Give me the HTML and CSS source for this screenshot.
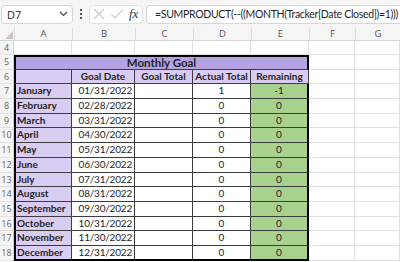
FILE: index.html
```html
<!DOCTYPE html>
<html lang="en">
<head>
  <meta charset="UTF-8">
  <title>Monthly Goal</title>
  <link rel="stylesheet" href="styles.css">
</head>
<body>

  <div class="toolbar">
    <div class="namebox">
      <span>D7</span>
      <svg width="9" height="6" viewBox="0 0 9 6"><path d="M1 1 L4.5 4.5 L8 1" fill="none" stroke="#444" stroke-width="1.2"/></svg>
    </div>
    <div class="dots"><i></i><i></i><i></i></div>
    <div class="fxbox">
      <svg width="14" height="14" viewBox="0 0 14 14"><path d="M2 2 L12 12 M12 2 L2 12" stroke="#c8c8c8" stroke-width="1.1"/></svg>
      <svg width="14" height="14" viewBox="0 0 14 14"><path d="M1.5 7.5 L5 11 L12.5 3" fill="none" stroke="#c8c8c8" stroke-width="1.1"/></svg>
      <span class="fx">fx</span>
    </div>
    <div class="formula">=SUMPRODUCT(--((MONTH(Tracker[Date Closed])=1)))</div>
  </div>

  <div class="sheet">
    <div class="corner"><svg width="8" height="8" viewBox="0 0 8 8"><path d="M8 0 L8 8 L0 8 Z" fill="#c6c6c6"/></svg></div>
    <div class="colhead">A</div>
    <div class="colhead">B</div>
    <div class="colhead">C</div>
    <div class="colhead">D</div>
    <div class="colhead">E</div>
    <div class="colhead">F</div>
    <div class="colhead">G</div>

    <div class="rowhead">4</div>
    <div class="cell"></div><div class="cell"></div><div class="cell"></div><div class="cell"></div><div class="cell"></div><div class="cell"></div><div class="cell"></div>

    <div class="rowhead">5</div>
    <div class="title">Monthly Goal</div>
    <div class="cell"></div><div class="cell"></div>

    <div class="rowhead">6</div>
    <div class="month"></div>
    <div class="head">Goal Date</div>
    <div class="head">Goal Total</div>
    <div class="head">Actual Total</div>
    <div class="head">Remaining</div>
    <div class="cell"></div><div class="cell"></div>

    <div class="rowhead">7</div>
    <div class="month">January</div><div class="date">01/31/2022</div><div class="blank"></div><div class="num">1</div><div class="rem">-1</div>
    <div class="cell"></div><div class="cell"></div>

    <div class="rowhead">8</div>
    <div class="month">February</div><div class="date">02/28/2022</div><div class="blank"></div><div class="num">0</div><div class="rem">0</div>
    <div class="cell"></div><div class="cell"></div>

    <div class="rowhead">9</div>
    <div class="month">March</div><div class="date">03/31/2022</div><div class="blank"></div><div class="num">0</div><div class="rem">0</div>
    <div class="cell"></div><div class="cell"></div>

    <div class="rowhead">10</div>
    <div class="month">April</div><div class="date">04/30/2022</div><div class="blank"></div><div class="num">0</div><div class="rem">0</div>
    <div class="cell"></div><div class="cell"></div>

    <div class="rowhead">11</div>
    <div class="month">May</div><div class="date">05/31/2022</div><div class="blank"></div><div class="num">0</div><div class="rem">0</div>
    <div class="cell"></div><div class="cell"></div>

    <div class="rowhead">12</div>
    <div class="month">June</div><div class="date">06/30/2022</div><div class="blank"></div><div class="num">0</div><div class="rem">0</div>
    <div class="cell"></div><div class="cell"></div>

    <div class="rowhead">13</div>
    <div class="month">July</div><div class="date">07/31/2022</div><div class="blank"></div><div class="num">0</div><div class="rem">0</div>
    <div class="cell"></div><div class="cell"></div>

    <div class="rowhead">14</div>
    <div class="month">August</div><div class="date">08/31/2022</div><div class="blank"></div><div class="num">0</div><div class="rem">0</div>
    <div class="cell"></div><div class="cell"></div>

    <div class="rowhead">15</div>
    <div class="month">September</div><div class="date">09/30/2022</div><div class="blank"></div><div class="num">0</div><div class="rem">0</div>
    <div class="cell"></div><div class="cell"></div>

    <div class="rowhead">16</div>
    <div class="month">October</div><div class="date">10/31/2022</div><div class="blank"></div><div class="num">0</div><div class="rem">0</div>
    <div class="cell"></div><div class="cell"></div>

    <div class="rowhead">17</div>
    <div class="month">November</div><div class="date">11/30/2022</div><div class="blank"></div><div class="num">0</div><div class="rem">0</div>
    <div class="cell"></div><div class="cell"></div>

    <div class="rowhead">18</div>
    <div class="month last">December</div><div class="date last">12/31/2022</div><div class="blank last"></div><div class="num last">0</div><div class="rem last">0</div>
    <div class="cell"></div><div class="cell"></div>
  </div>

</body>
</html>
```

FILE: styles.css
```css
body {
  margin: 0;
  background-color: #ffffff;
  font-family: "Lato", sans-serif;
  color: #1f1f1f;
  overflow: hidden;
}
.toolbar {
  height: 28px;
  background-color: #f5f5f5;
  display: flex;
  align-items: center;
  box-sizing: border-box;
  padding-left: 1px;
}
.namebox {
  width: 72px;
  height: 19px;
  box-sizing: border-box;
  background-color: #fff;
  border: 1px solid #d6d6d6;
  border-radius: 4px;
  display: flex;
  align-items: center;
  justify-content: space-between;
  padding: 0 4px 0 5px;
  font-family: "Open Sans", sans-serif;
  font-size: 11px;
}
.dots {
  width: 16px;
  display: flex;
  flex-direction: column;
  align-items: center;
  gap: 2px;
}
.dots i {
  width: 2px;
  height: 2px;
  background-color: #555;
}
.fxbox {
  width: 54px;
  height: 19px;
  box-sizing: border-box;
  background-color: #fff;
  border: 1px solid #e0e0e0;
  border-radius: 4px;
  display: flex;
  align-items: center;
  gap: 4px;
  padding-left: 2px;
}
.fx {
  font-family: "Liberation Serif", serif;
  font-style: italic;
  font-size: 13px;
  color: #333;
  margin-left: 1px;
}
.formula {
  flex: 1;
  height: 19px;
  margin-left: 3px;
  box-sizing: border-box;
  background-color: #fff;
  border: 1px solid #d6d6d6;
  border-right: none;
  border-radius: 4px 0 0 4px;
  padding-left: 8px;
  font-size: 10.5px;
  letter-spacing: -0.32px;
  line-height: 17px;
  white-space: nowrap;
  overflow: hidden;
}
.sheet {
  display: grid;
  grid-template-columns: 14px 58px 63px 58px 58px 58px 46px 1fr;
  grid-template-rows: 13px 14px repeat(14, 14.7px);
  font-size: 10px;
}
.sheet > div {
  box-sizing: border-box;
  white-space: nowrap;
  overflow: hidden;
}
.corner {
  background-color: #f5f5f5;
  display: flex;
  align-items: flex-end;
  justify-content: flex-end;
  padding: 0 1px 1px 0;
  border-bottom: 1px solid #d4d4d4;
}
.colhead {
  background-color: #f5f5f5;
  color: #555;
  font-family: "Open Sans", sans-serif;
  font-size: 9.5px;
  text-align: center;
  line-height: 12px;
  border-left: 1px solid #dcdcdc;
  border-bottom: 1px solid #d4d4d4;
}
.rowhead {
  background-color: #f5f5f5;
  color: #666;
  font-family: "Open Sans", sans-serif;
  font-size: 9px;
  text-align: center;
  line-height: 14px;
  border-right: 1px solid #d4d4d4;
  border-bottom: 1px solid #e2e2e2;
}
.cell {
  border-right: 1px solid #e1e1e1;
  border-bottom: 1px solid #e1e1e1;
}
.title, .month, .head, .date, .blank, .num, .rem {
  border-right: 1px solid #3c3c3c;
  border-bottom: 1px solid #3c3c3c;
  line-height: 13.7px;
}
.title {
  grid-column: 2 / 7;
  background-color: #b4a2e2;
  border-top: 2px solid #000;
  border-left: 2px solid #000;
  border-right: 2px solid #000;
  font-weight: bold;
  font-size: 11.5px;
  line-height: 12.7px;
  text-align: center;
}
.month {
  background-color: #d9ccf2;
  border-left: 2px solid #000;
  font-weight: bold;
  padding-left: 1px;
}
.head {
  background-color: #d9ccf2;
  font-weight: bold;
  text-align: center;
}
.date {
  text-align: right;
  padding-right: 2px;
  letter-spacing: -0.2px;
}
.num {
  text-align: center;
}
.rem {
  background-color: #a9d18e;
  border-right: 2px solid #000;
  text-align: center;
}
.last {
  border-bottom: 2px solid #000;
  line-height: 12.7px;
}
```
